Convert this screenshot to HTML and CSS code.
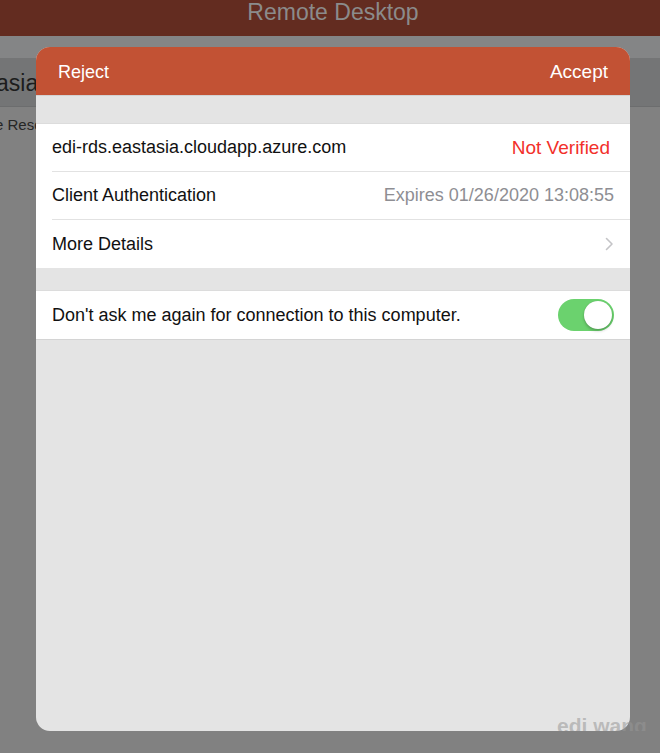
FILE: index.html
```html
<!DOCTYPE html>
<html lang="en">
<head>
<meta charset="utf-8">
<title>Remote Desktop</title>
<link rel="stylesheet" href="styles.css">
</head>
<body>
<div class="screen">
  <header class="appbar"><span class="apptitle">Remote Desktop</span></header>
  <div class="strip"></div>
  <div class="bgrow"><span class="bgrow-text">asia.cloudapp.azure.com</span></div>
  <div class="bgsub"><span class="bgsub-text">e Resource</span></div>

  <div class="modal">
    <div class="modal-head">
      <span class="head-btn">Reject</span>
      <span class="head-btn head-accept">Accept</span>
    </div>
    <div class="spacer spacer-top"></div>
    <div class="group">
      <div class="row">
        <span class="label">edi-rds.eastasia.cloudapp.azure.com</span>
        <span class="value value-red">Not Verified</span>
      </div>
      <div class="row">
        <span class="label">Client Authentication</span>
        <span class="value value-gray">Expires 01/26/2020 13:08:55</span>
      </div>
      <div class="row row-last">
        <span class="label">More Details</span>
        <svg class="chevron" width="9" height="14" viewBox="0 0 9 14"><path d="M1.5 1.5 L7 7 L1.5 12.5" fill="none" stroke="#c4c4c7" stroke-width="1.6" stroke-linecap="round" stroke-linejoin="round"/></svg>
      </div>
    </div>
    <div class="spacer spacer-mid"></div>
    <div class="group group-bordered">
      <div class="row row-last">
        <span class="label">Don't ask me again for connection to this computer.</span>
        <span class="toggle"><span class="knob"></span></span>
      </div>
    </div>
  </div>

  <div class="watermark">edi wang</div>
</div>
</body>
</html>
```
FILE: styles.css
```css
html, body {
  margin: 0;
  padding: 0;
}
body {
  width: 660px;
  height: 753px;
  overflow: hidden;
  background: #818181;
  font-family: "Liberation Sans", Arial, sans-serif;
}
.screen {
  position: relative;
  width: 660px;
  height: 753px;
  background: #818181;
}
.appbar {
  height: 36px;
  background: #632c20;
  display: flex;
  align-items: center;
  justify-content: center;
}
.apptitle {
  color: #8b8b8b;
  font-size: 23px;
  margin-top: -11px;
  margin-left: 6px;
}
.strip {
  height: 22px;
  background: #848586;
}
.bgrow {
  height: 48px;
  background: #747576;
  border-bottom: 1px solid #6c6d6e;
  display: flex;
  align-items: center;
  overflow: hidden;
}
.bgrow-text {
  color: #1d1d1d;
  font-size: 23px;
  margin-left: -4px;
  margin-top: 2px;
  white-space: nowrap;
}
.bgsub {
  height: 32px;
  display: flex;
  align-items: center;
  overflow: hidden;
}
.bgsub-text {
  color: #262626;
  font-size: 15px;
  margin-left: -5px;
  margin-top: 2px;
  white-space: nowrap;
}
.modal {
  position: absolute;
  left: 36px;
  top: 47px;
  width: 594px;
  height: 684px;
  border-radius: 14px;
  overflow: hidden;
  background: #e4e4e4;
}
.modal-head {
  height: 49px;
  background: #c25234;
  display: flex;
  align-items: center;
  justify-content: space-between;
  padding: 0 22px;
  border-bottom: 1px solid #d2d2d2;
  box-sizing: border-box;
}
.head-btn {
  color: #ffffff;
  font-size: 18px;
  margin-top: 2px;
}
.head-accept {
  font-size: 19px;
}
.spacer-top {
  height: 28px;
}
.spacer-mid {
  height: 23px;
}
.group {
  background: #ffffff;
  border-top: 1px solid #dcdcdc;
  margin-top: -1px;
}
.group-bordered {
  border-bottom: 1px solid #d4d4d4;
}
.row {
  height: 48px;
  margin-left: 16px;
  padding-right: 16px;
  display: flex;
  align-items: center;
  justify-content: space-between;
  border-bottom: 1px solid #e2e2e2;
  box-sizing: border-box;
}
.row-last {
  border-bottom: none;
}
.label {
  color: #111111;
  font-size: 18px;
}
.value {
  font-size: 18px;
}
.value-red {
  color: #f2302a;
  font-size: 19px;
  margin-right: 4px;
}
.value-gray {
  color: #8e8e93;
}
.chevron {
  margin-right: 0;
}
.toggle {
  position: relative;
  width: 56px;
  height: 32px;
  border-radius: 16px;
  background: #6bd26e;
  display: block;
}
.knob {
  position: absolute;
  right: 2px;
  top: 2px;
  width: 28px;
  height: 28px;
  border-radius: 50%;
  background: #ffffff;
  box-shadow: 0 2px 3px rgba(0, 0, 0, 0.22), 0 0 1px rgba(0, 0, 0, 0.2);
}
.watermark {
  position: absolute;
  left: 557px;
  top: 714px;
  color: rgba(150, 150, 150, 0.55);
  font-weight: bold;
  font-size: 21px;
  font-family: "Liberation Sans", Arial, sans-serif;
  height: 17px;
  overflow: hidden;
  line-height: 24px;
}
```
